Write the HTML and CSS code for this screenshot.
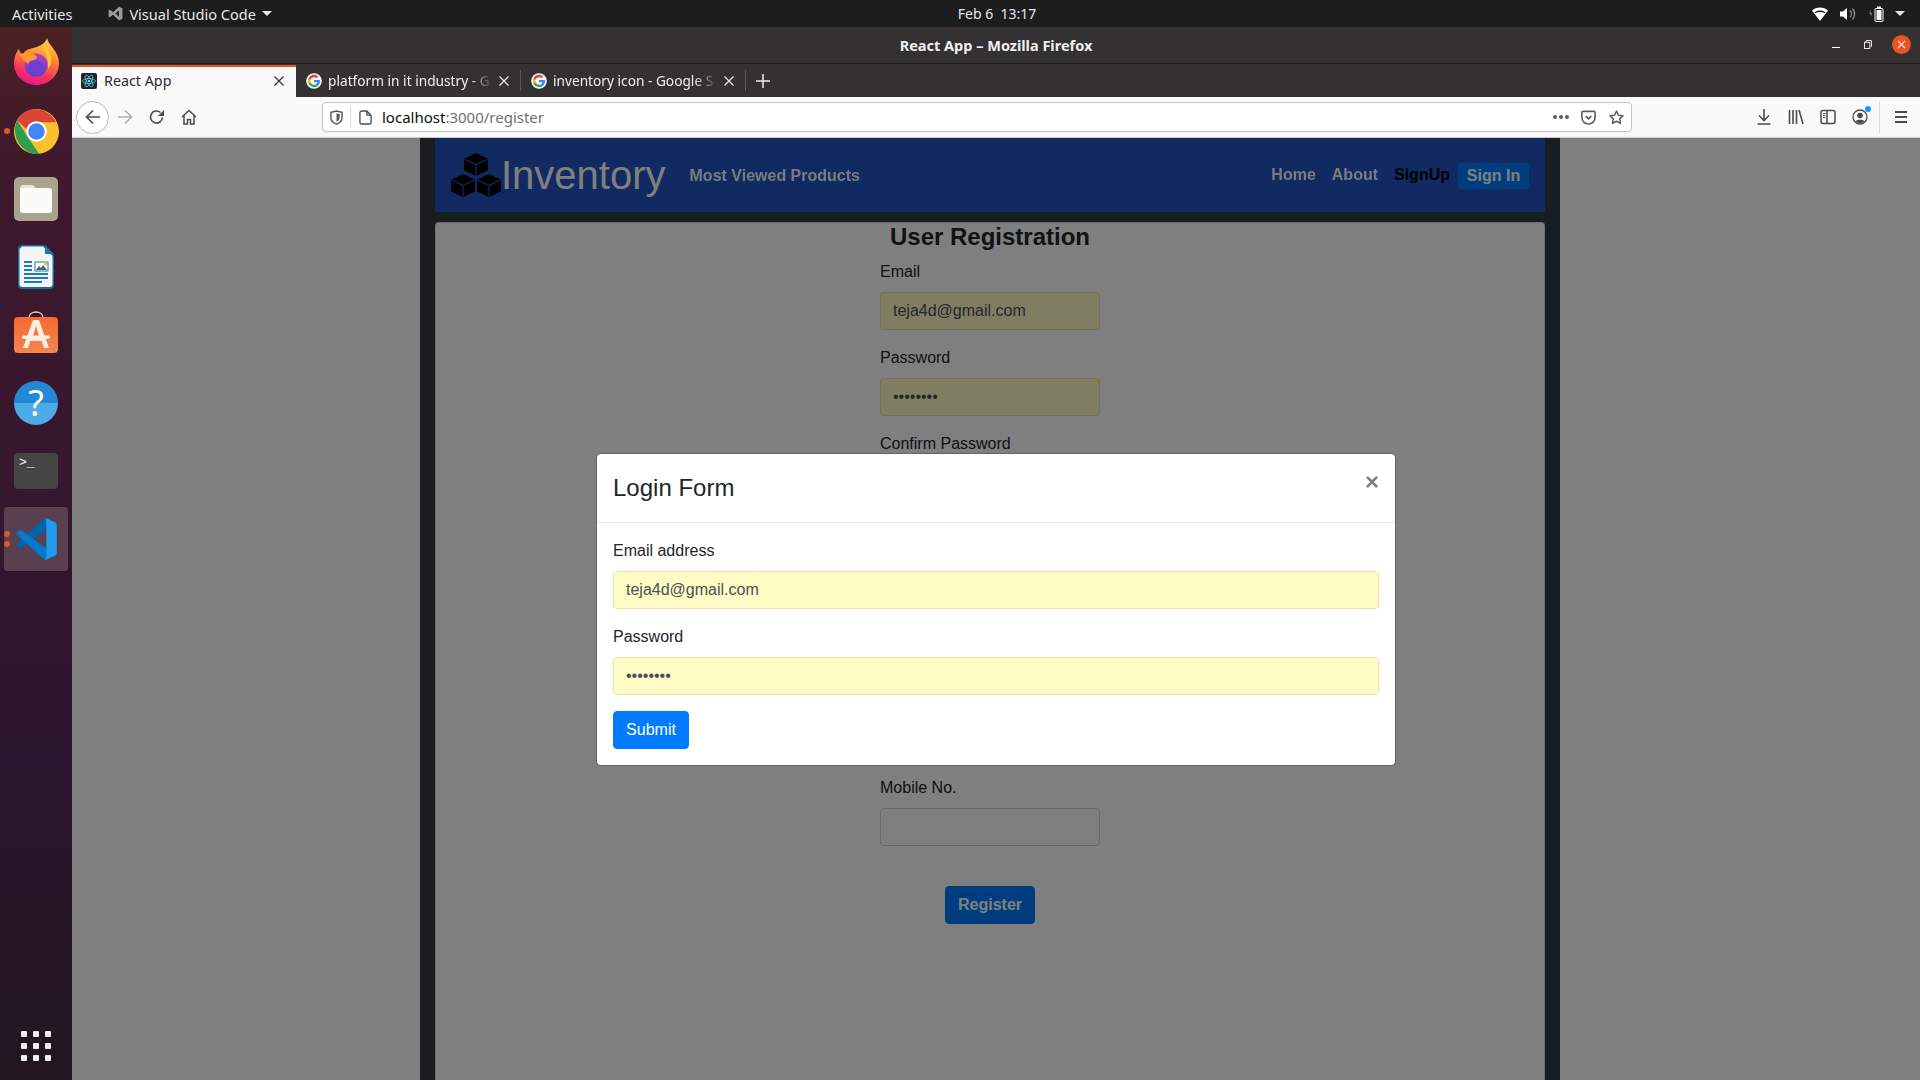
FILE: index.html
```html
<!DOCTYPE html>
<html lang="en">
<head>
<meta charset="utf-8">
<title>React App</title>
<link rel="stylesheet" href="styles.css">
</head>
<body>
<svg class="defs" width="0" height="0">
  <defs>
    <symbol id="g" viewBox="0 0 48 48">
      <circle cx="24" cy="24" r="23.500" fill="#fff"/>
      <path fill="#4285f4" d="M42 24.500c0-1.300-.1-2.500-.3-3.700H24v7h10c-.4 2.300-1.700 4.200-3.700 5.500v4.600h6C39.900 34.700 42 30.100 42 24.500z"/>
      <path fill="#34a853" d="M24 42.500c5 0 9.200-1.700 12.300-4.500l-6-4.600c-1.700 1.100-3.800 1.800-6.300 1.800-4.800 0-8.900-3.200-10.300-7.600H7.500v4.800C10.500 38.400 16.800 42.500 24 42.500z"/>
      <path fill="#fbbc05" d="M13.700 27.600c-.8-2.300-.8-4.900 0-7.200v-4.800H7.500c-2.500 5-2.500 11.800 0 16.800l6.200-4.800z"/>
      <path fill="#ea4335" d="M24 12.800c2.700 0 5.100.9 7 2.800l5.300-5.300C33.100 7.300 28.900 5.500 24 5.500c-7.200 0-13.500 4.100-16.500 10.100l6.200 4.800c1.400-4.400 5.500-7.600 10.300-7.600z"/>
    </symbol>
    <symbol id="cube" viewBox="0 0 24 23">
      <path fill="#000" d="M12 0l12 5.800v11.400L12 23 0 17.200V5.800z"/>
      <path fill="none" stroke="#2254c4" stroke-width="1.200" d="M0.500 6L12 11.500 23.500 6M12 11.500V23"/>
    </symbol>
  </defs>
</svg>

<header class="topbar">
  <div class="top-left">
    <span class="activities">Activities</span>
    <span class="app-menu">
      <svg class="vs-mono" viewBox="0 0 24 24"><path fill="#9a9a9a" d="M17.500 1L23 3.700v16.600L17.500 23 8 14l-5 4-2-1.300V7.300L3 6l5 4zM17.500 7L12 12l5.500 5z"/></svg>
      Visual Studio Code
      <i class="caret"></i>
    </span>
  </div>
  <div class="clock">Feb 6&nbsp;&nbsp;13:17</div>
  <div class="tray">
    <svg class="t-wifi" viewBox="0 0 16 14"><path fill="#fff" d="M0 3.500C4-.5 12-.5 16 3.500L8 14z"/><path fill="#1d1d1d" d="M2.500 5.200c3-2.200 8-2.200 11 0l-.7 1C10 4.500 6 4.500 3.200 6.200z"/></svg>
    <svg class="t-vol" viewBox="0 0 16 14"><path fill="#fff" d="M0 4.500h3L7 1v12L3 9.500H0z"/><path fill="none" stroke="#9a9a9a" stroke-width="1.200" d="M10 3.500c1.800 2 1.800 5 0 7M12.500 1.500c2.800 3 2.800 8 0 11"/></svg>
    <svg class="t-bat" viewBox="0 0 16 16"><path fill="#777" d="M1 8l2-4v3h1.500l-2 4V8z"/><rect x="7" y="2.500" width="8" height="13" rx="1" fill="none" stroke="#fff"/><rect x="9" y="0.500" width="4" height="2" fill="#fff"/><rect x="8.500" y="4" width="5" height="10" fill="#fff"/></svg>
    <i class="caret"></i>
  </div>
</header>

<div class="desktop">
  <nav class="dock">
    <div class="dock-item dock-ff">
      <svg class="ic-ff" viewBox="0 0 45 47">
        <defs>
          <linearGradient id="ffa" x1="0.700" y1="0" x2="0.400" y2="1"><stop offset="0" stop-color="#ffd83f"/><stop offset=".4" stop-color="#ff8a30"/><stop offset=".75" stop-color="#f8345a"/><stop offset="1" stop-color="#e8158a"/></linearGradient>
          <linearGradient id="ffb" x1="0.500" y1="0" x2="0.500" y2="1"><stop offset="0" stop-color="#b93fc0"/><stop offset="1" stop-color="#5a3fd6"/></linearGradient>
        </defs>
        <path fill="url(#ffa)" d="M33 0c1 7 12 13 12 25 0 12.500-10 22-22.500 22S0 37.500 0 25c0-6 2.500-11.500 5-14 .5 3 2 4.500 4 5 3-6 10-5 16-8 4-2 7-4 8-8z"/>
        <circle cx="22" cy="27" r="11.500" fill="url(#ffb)"/>
        <circle cx="22" cy="30" r="7.500" fill="#6b3fd0"/>
        <path fill="#ff9a2e" d="M6 17c4-3 10-3 15 0 3 2 2 4-1 5-3 0-5 1-6 4-3-3-6-5-8-9z"/>
        <path fill="#ffc83a" d="M28 6c6 4 10 10 9 19-1 3-2 5-3 6 1-9-2-17-6-25z"/>
      </svg>
    </div>
    <div class="dock-item">
      <i class="run-dot"></i>
      <svg class="ic-chrome" viewBox="0 0 48 48">
        <circle cx="24" cy="24" r="24" fill="#fbc02d"/>
        <path fill="#2e9e4f" d="M3.200 12L16 32 27 48C12 50-5 32 3.200 12z"/>
        <path fill="#db4437" d="M3.200 12C12-4 36-4 44.800 14H24c-6 0-9 3-10 8z"/>
        <circle cx="24" cy="24" r="11" fill="#fff"/>
        <circle cx="24" cy="24" r="8.800" fill="#4285f4"/>
      </svg>
    </div>
    <div class="dock-item">
      <svg class="ic-files" viewBox="0 0 44 44">
        <rect width="44" height="44" rx="5" fill="#a8a28f"/>
        <path fill="#e6e3d9" d="M6 11a3 3 0 0 1 3-3h10l4 4H6z"/>
        <rect x="6" y="11" width="32" height="25" rx="2.500" fill="#fbfbf8"/>
      </svg>
    </div>
    <div class="dock-item">
      <svg class="ic-writer" viewBox="0 0 36 44">
        <path fill="#0f6f9f" d="M4 0h22l10 10v30a4 4 0 0 1-4 4H4a4 4 0 0 1-4-4V4a4 4 0 0 1 4-4z"/>
        <path fill="#f5f5f5" d="M4 1.500h21l9.500 9.500v28a3 3 0 0 1-3 3H4.500a3 3 0 0 1-3-3V4z"/>
        <path fill="#1379b5" d="M27 0l9 9h-9z"/>
        <path fill="#1a7fb8" d="M6 16h8v2H6zM6 20h8v2H6zM6 24h8v2H6zM6 28h24v2H6zM6 32h24v2H6zM6 36h18v2H6z"/>
        <rect x="17" y="17" width="13" height="9" fill="#fff" stroke="#1a7fb8"/>
        <path fill="#50606a" d="M18 25l3-4 2 2 2-3 4 5z"/>
        <rect x="26" y="17.500" width="3" height="3" fill="#f5c242"/>
      </svg>
    </div>
    <div class="dock-item">
      <svg class="ic-store" viewBox="0 0 44 42">
        <defs><linearGradient id="sto" x1="0" y1="0" x2="0" y2="1"><stop offset="0" stop-color="#f26a2e"/><stop offset="1" stop-color="#f58552"/></linearGradient></defs>
        <path fill="none" stroke="#f3d2a8" stroke-width="1.500" d="M15 7c0-8 14-8 14 0"/>
        <rect y="6" width="44" height="36" rx="4" fill="url(#sto)"/>
        <path fill="#fdeee2" d="M19 9h6l10 28h-5l-2.300-7h-11.400L14 37H9z"/>
        <path fill="#f47a42" d="M22 15l-3 10h6z"/>
        <rect x="8" y="24.500" width="28" height="3.500" rx="1.700" fill="#fdeee2"/>
      </svg>
    </div>
    <div class="dock-item">
      <div class="ic-help">?</div>
    </div>
    <div class="dock-item">
      <div class="ic-term">&gt;_</div>
    </div>
    <div class="dock-item dock-active">
      <i class="run-dot run-a"></i>
      <i class="run-dot run-b"></i>
      <svg class="ic-vs" viewBox="0 0 100 100">
        <path fill="#0065a9" d="M96 10.800L75.400.9a6.200 6.200 0 0 0-7.100 1.200L4.900 60c-1.700 1.600-1.700 4.200 0 5.800l5.500 5c1.300 1.200 3.300 1.300 4.700.200L96 12z"/>
        <path fill="#007acc" d="M96 89.200L75.400 99.100a6.200 6.200 0 0 1-7.100-1.200L4.900 40c-1.700-1.600-1.700-4.200 0-5.800l5.500-5c1.300-1.200 3.300-1.300 4.700-.200L96 88z"/>
        <path fill="#1f9cf0" d="M75.400 99.100a6.200 6.200 0 0 1-7.100-1.200c2.300 2.300 6.200.7 6.200-2.600V4.700c0-3.300-3.900-4.900-6.200-2.600a6.200 6.200 0 0 1 7.100-1.200l20.600 9.900c2.200 1 3.500 3.200 3.500 5.600v67.200c0 2.400-1.400 4.600-3.500 5.600z"/>
      </svg>
    </div>
    <div class="dock-spacer"></div>
    <div class="apps-grid"><i></i><i></i><i></i><i></i><i></i><i></i><i></i><i></i><i></i></div>
  </nav>

  <div class="browser">
    <div class="titlebar">
      <span class="win-title">React App – Mozilla Firefox</span>
      <div class="win-ctrls">
        <i class="w-min"></i>
        <svg class="w-max" viewBox="0 0 9 10"><path fill="none" stroke="#fff" d="M2.500 2.500V.5h6v6.500H7"/><rect x="0.500" y="2.500" width="6" height="7" fill="none" stroke="#fff"/></svg>
        <span class="w-close"><svg viewBox="0 0 10 10"><path stroke="#fff" stroke-width="1.200" d="M1 1l8 8M9 1l-8 8"/></svg></span>
      </div>
    </div>

    <div class="tabbar">
      <div class="tab tab-active">
        <svg class="fav" viewBox="0 0 16 16"><rect width="16" height="16" rx="2" fill="#20232a"/><g fill="none" stroke="#61dafb" stroke-width=".7"><ellipse cx="8" cy="8" rx="6.500" ry="2.500"/><ellipse cx="8" cy="8" rx="6.500" ry="2.500" transform="rotate(60 8 8)"/><ellipse cx="8" cy="8" rx="6.500" ry="2.500" transform="rotate(120 8 8)"/></g><circle cx="8" cy="8" r="1.300" fill="#61dafb"/></svg>
        <span class="tab-label">React App</span>
        <svg class="tab-x" viewBox="0 0 10 10"><path stroke="currentColor" stroke-width="1.300" d="M.5.5l9 9M9.500.5l-9 9"/></svg>
      </div>
      <div class="tab tab-dark tab-sep">
        <svg class="fav"><use href="#g"/></svg>
        <span class="tab-label tab-fade">platform in it industry - G</span>
        <svg class="tab-x" viewBox="0 0 10 10"><path stroke="currentColor" stroke-width="1.300" d="M.5.5l9 9M9.500.5l-9 9"/></svg>
      </div>
      <div class="tab tab-dark tab-sep">
        <svg class="fav"><use href="#g"/></svg>
        <span class="tab-label tab-fade">inventory icon - Google S</span>
        <svg class="tab-x" viewBox="0 0 10 10"><path stroke="currentColor" stroke-width="1.300" d="M.5.5l9 9M9.500.5l-9 9"/></svg>
      </div>
      <svg class="new-tab" viewBox="0 0 14 14"><path stroke="#f0f0f0" stroke-width="1.500" d="M7 0v14M0 7h14"/></svg>
    </div>

    <div class="toolbar">
      <span class="back"><svg viewBox="0 0 16 16"><path fill="none" stroke="#4a4a4f" stroke-width="1.600" d="M15 8H1.500M8 1.500L1.500 8 8 14.500"/></svg></span>
      <span class="tb-btn"><svg viewBox="0 0 16 16"><path fill="none" stroke="#b1b1b3" stroke-width="1.600" d="M1 8h13.500M8 1.500L14.500 8 8 14.500"/></svg></span>
      <span class="tb-btn"><svg viewBox="0 0 16 16"><path fill="none" stroke="#4a4a4f" stroke-width="1.600" d="M13.500 8.500a6 6 0 1 1-2-5"/><path fill="#4a4a4f" d="M15 1v6H9z"/></svg></span>
      <span class="tb-btn"><svg viewBox="0 0 16 16"><path fill="none" stroke="#4a4a4f" stroke-width="1.500" d="M1 8l7-6.500L15 8M3 6.500V15h3.500v-4.500h3V15H13V6.500"/></svg></span>
      <div class="urlbar">
        <svg class="u-shield" viewBox="0 0 14 16"><path fill="none" stroke="#5b5b5f" stroke-width="1.600" d="M7 1l6 1.500V8c0 3-2.500 6-6 7-3.500-1-6-4-6-7V2.500z"/><path fill="#5b5b5f" d="M7 3.500l3.500 1V8c0 2-1.500 3.500-3.500 4.500z"/></svg>
        <i class="u-sep"></i>
        <svg class="u-page" viewBox="0 0 14 16"><path fill="none" stroke="#4a4a4f" stroke-width="1.400" d="M3 1h5.500L13 5.500V13a2 2 0 0 1-2 2H3a2 2 0 0 1-2-2V3a2 2 0 0 1 2-2zM8.500 1v4.500H13"/></svg>
        <span class="u-text"><b>localhost</b>:3000/register</span>
        <span class="u-dots"><i></i><i></i><i></i></span>
        <svg class="u-pocket" viewBox="0 0 16 16"><path fill="none" stroke="#5b5b5f" stroke-width="1.700" d="M2 1.500h12a1 1 0 0 1 1 1V8a7 7 0 0 1-14 0V2.500a1 1 0 0 1 1-1zM5 6.500l3 3 3-3"/></svg>
        <svg class="u-star" viewBox="0 0 16 16"><path fill="none" stroke="#5b5b5f" stroke-width="1.600" stroke-linejoin="round" d="M8 1.200l2.100 4.400 4.800.6-3.500 3.300.9 4.800L8 12l-4.300 2.300.9-4.800L1.100 6.200l4.800-.6z"/></svg>
      </div>
      <div class="tools">
        <svg class="tool" viewBox="0 0 16 16"><path fill="none" stroke="#4a4a4f" stroke-width="1.600" d="M8 0v11M3 6.500l5 5 5-5M1.500 15h13"/></svg>
        <svg class="tool" viewBox="0 0 16 16"><path fill="none" stroke="#4a4a4f" stroke-width="1.600" d="M1.500 1v14M5 1v14M8.500 1v14M11 1l4 14"/></svg>
        <svg class="tool" viewBox="0 0 16 16"><rect x="1" y="1.500" width="14" height="13" rx="2" fill="none" stroke="#4a4a4f" stroke-width="1.500"/><path stroke="#4a4a4f" stroke-width="1.500" d="M7 1.500v13"/><path stroke="#4a4a4f" d="M3 4.500h2.500M3 6.500h2.500M3 8.500h2.500"/></svg>
        <span class="tool-prof">
          <svg class="tool" viewBox="0 0 16 16"><circle cx="8" cy="8" r="7" fill="none" stroke="#4a4a4f" stroke-width="1.300"/><circle cx="8" cy="6.500" r="2.800" fill="#4a4a4f"/><path fill="#4a4a4f" d="M3.500 12.500c1-2.500 8-2.500 9 0-2 2-7 2-9 0z"/></svg>
          <i class="prof-dot"></i>
        </span>
        <i class="tool-sep"></i>
        <svg class="tool" viewBox="0 0 16 16"><path stroke="#4a4a4f" stroke-width="2" d="M2 3h12M2 8h12M2 13h12"/></svg>
      </div>
    </div>

    <main class="page">
      <div class="container">
        <div class="navbar">
          <a class="brand">
            <span class="logo">
              <svg class="cube cube-top"><use href="#cube"/></svg>
              <svg class="cube cube-left"><use href="#cube"/></svg>
              <svg class="cube cube-right"><use href="#cube"/></svg>
            </span>
            <span class="brand-name">Inventory</span>
          </a>
          <a class="nav-link mvp">Most Viewed Products</a>
          <div class="nav-right">
            <a class="nav-link">Home</a>
            <a class="nav-link">About</a>
            <a class="nav-link nav-black">SignUp</a>
            <a class="sign-in">Sign In</a>
          </div>
        </div>
        <div class="card">
          <h3 class="card-title">User Registration</h3>
          <form class="reg-form">
            <div class="field"><label class="lbl">Email</label><input class="inp inp-auto" value="teja4d@gmail.com"></div>
            <div class="field"><label class="lbl">Password</label><input class="inp inp-auto" type="password" value="12345678"></div>
            <div class="field"><label class="lbl">Confirm Password</label><input class="inp"></div>
            <div class="field"><label class="lbl">&nbsp;</label><input class="inp"></div>
            <div class="field"><label class="lbl">&nbsp;</label><input class="inp"></div>
            <div class="field"><label class="lbl">&nbsp;</label><input class="inp"></div>
            <div class="field"><label class="lbl">Mobile No.</label><input class="inp"></div>
            <button type="button" class="btn-register">Register</button>
          </form>
        </div>
      </div>

      <div class="backdrop"></div>
      <div class="modal-wrap">
        <div class="modal">
          <div class="modal-head">
            <h5 class="modal-title">Login Form</h5>
            <span class="close">×</span>
          </div>
          <form class="modal-body">
            <div class="field"><label class="lbl">Email address</label><input class="inp inp-auto inp-wide" value="teja4d@gmail.com"></div>
            <div class="field"><label class="lbl">Password</label><input class="inp inp-auto inp-wide" type="password" value="12345678"></div>
            <button type="button" class="btn-submit">Submit</button>
          </form>
        </div>
      </div>
    </main>
  </div>
</div>
</body>
</html>
```

FILE: styles.css
```css
* { box-sizing: border-box; }
html, body { margin: 0; height: 100%; }
body {
  width: 1920px;
  height: 1080px;
  overflow: hidden;
  display: flex;
  flex-direction: column;
  font-family: "Liberation Sans", Arial, sans-serif;
  font-size: 16px;
  color: #212529;
}
.defs { position: absolute; }

/* GNOME top bar */
.topbar {
  height: 27px;
  flex: none;
  background: #1d1d1d;
  color: #e8e8e8;
  font-family: "Noto Sans", sans-serif;
  font-size: 14.5px;
  display: grid;
  grid-template-columns: 1fr auto 1fr;
  align-items: center;
  padding-left: 12px;
}
.top-left { display: flex; align-items: center; gap: 36px; }
.app-menu { display: flex; align-items: center; gap: 6px; }
.vs-mono { width: 15px; height: 15px; }
.caret {
  display: inline-block;
  width: 0; height: 0;
  border-left: 5px solid transparent;
  border-right: 5px solid transparent;
  border-top: 5px solid #e8e8e8;
}
.clock { padding-left: 62px; font-size: 14px; }
.tray { display: flex; align-items: center; justify-content: flex-end; padding-right: 15px; gap: 12px; }
.t-wifi { width: 16px; height: 14px; }
.t-vol { width: 16px; height: 14px; }
.t-bat { width: 16px; height: 16px; margin-right: -1px; }

/* Desktop */
.desktop { flex: 1; display: flex; min-height: 0; }
.dock {
  width: 72px;
  flex: none;
  padding-top: 2px;
  display: flex;
  flex-direction: column;
  align-items: center;
  background: linear-gradient(#4b2122 0, #40192c 12%, #35172f 45%, #2c1530 70%, #231620 100%);
}
.dock-item {
  position: relative;
  height: 68px;
  width: 64px;
  display: flex;
  align-items: center;
  justify-content: center;
  flex: none;
}
.dock-ff svg { margin-bottom: 4px; }
.run-dot {
  position: absolute;
  left: 0;
  top: 31px;
  width: 6px; height: 6px;
  border-radius: 50%;
  background: #e95420;
}
.run-a { left: 0; top: 24px; }
.run-b { left: 0; top: 34px; }
.ic-ff { width: 45px; height: 47px; }
.ic-chrome { width: 45px; height: 45px; }
.ic-files { width: 44px; height: 44px; }
.ic-writer { width: 36px; height: 44px; }
.ic-store { width: 44px; height: 42px; margin-bottom: 6px; }
.ic-help {
  width: 44px; height: 44px;
  border-radius: 50%;
  background: linear-gradient(#2488d8 50%, #4dabe8 50%);
  color: #fff;
  font-family: "Noto Sans", sans-serif;
  font-size: 36px;
  line-height: 44px;
  text-align: center;
}
.ic-term {
  width: 44px; height: 36px;
  border-radius: 4px;
  background: #454545;
  color: #fff;
  font-family: "Liberation Mono", monospace;
  font-size: 13px;
  line-height: 14px;
  padding: 3px 0 0 5px;
}
.dock-active { background: #584050; border-radius: 4px; height: 64px; margin-top: 2px; }
.ic-vs { width: 42px; height: 42px; }
.dock-spacer { flex: 1; }
.apps-grid {
  display: grid;
  grid-template-columns: repeat(3, 6px);
  gap: 6px;
  margin-bottom: 19px;
}
.apps-grid i { width: 6px; height: 6px; background: #eeeeee; border-radius: 1px; }

/* Browser */
.browser { flex: 1; display: flex; flex-direction: column; min-width: 0; }
.titlebar {
  height: 37px;
  flex: none;
  position: relative;
  background: #333132;
  border-bottom: 1px solid #1e1e1e;
  display: flex;
  align-items: center;
  justify-content: center;
  color: #f0f0f0;
  font-family: "Noto Sans", sans-serif;
  font-weight: 700;
  font-size: 14.5px;
}
.win-ctrls {
  position: absolute;
  right: 9px;
  top: 8px;
  display: flex;
  align-items: center;
  gap: 24px;
}
.w-min { width: 8px; height: 1px; background: #fff; margin-top: 6px; }
.w-max { width: 8px; height: 9px; }
.w-close {
  width: 19px; height: 19px;
  margin-left: -4px;
  border-radius: 50%;
  background: #e95420;
  display: flex;
  align-items: center;
  justify-content: center;
}
.w-close svg { width: 9px; height: 9px; }

.tabbar {
  height: 33px;
  flex: none;
  background: #333132;
  display: flex;
  align-items: stretch;
  color: #f0f0f0;
  font-family: "Noto Sans", sans-serif;
  font-size: 14.3px;
}
.tab {
  width: 225px;
  display: flex;
  align-items: center;
  padding: 0 9px;
  flex: none;
  position: relative;
}
.tab-active {
  width: 224px;
  background: #f9f9fa;
  color: #2b2b2e;
  border-top: 2px solid #e95420;
  margin-top: 1px;
  padding-bottom: 3px;
}
.tab-dark { font-size: 13.7px; }
.tab-sep::after {
  content: "";
  position: absolute;
  right: 0; top: 6px; bottom: 6px;
  width: 1px;
  background: #5a585a;
}
.fav { width: 16px; height: 16px; flex: none; margin-right: 7px; }
.tab-dark .fav { margin-left: 1px; margin-right: 6px; }
.tab-label { flex: 1; white-space: nowrap; overflow: hidden; }
.tab-fade {
  -webkit-mask-image: linear-gradient(to right, #000 85%, transparent 100%);
  mask-image: linear-gradient(to right, #000 85%, transparent 100%);
}
.tab-x { width: 10px; height: 10px; flex: none; margin-left: 6px; margin-right: 3px; color: #e8e8e8; }
.tab-active .tab-x { color: #3a3a3e; }
.new-tab { width: 14px; height: 14px; align-self: center; margin-left: 10px; }

.toolbar {
  height: 41px;
  flex: none;
  background: #f9f9fa;
  border-bottom: 1px solid #ccc;
  display: flex;
  align-items: center;
  padding-left: 4px;
}
.back {
  width: 33px; height: 33px;
  border-radius: 50%;
  border: 1px solid #b8b8ba;
  background: #fff;
  display: flex;
  align-items: center;
  justify-content: center;
}
.back svg, .tb-btn svg { width: 16px; height: 16px; }
.tb-btn { width: 32px; display: flex; justify-content: center; }
.urlbar {
  width: 1310px;
  height: 30px;
  margin-left: 117px;
  background: #fff;
  border: 1px solid #c4c4c6;
  border-radius: 4px;
  display: flex;
  align-items: center;
  padding: 0 7px 0 7px;
  box-shadow: 0 1px 2px rgba(0,0,0,.04);
}
.u-shield { width: 13px; height: 15px; flex: none; }
.u-sep { width: 1px; height: 22px; background: #d7d7db; margin: 0 8px 0 7px; flex: none; }
.u-page { width: 13px; height: 15px; flex: none; }
.u-text {
  flex: 1;
  margin-left: 10px;
  font-family: "Noto Sans", sans-serif;
  font-size: 15px;
  color: #6f6f73;
  white-space: nowrap;
}
.u-text b { font-weight: 400; color: #0c0c0d; }
.u-dots { display: flex; gap: 2px; margin-right: 12px; }
.u-dots i { width: 4px; height: 4px; border-radius: 50%; background: #5b5b5f; }
.u-pocket { width: 15px; height: 15px; flex: none; margin-right: 13px; }
.u-star { width: 15px; height: 15px; flex: none; }
.tools { flex: 1; display: flex; align-items: center; padding-left: 124px; gap: 16px; }
.tool { width: 16px; height: 16px; display: block; flex: none; }
.tool-prof { position: relative; }
.prof-dot {
  position: absolute;
  right: -3px; top: -3px;
  width: 6px; height: 6px;
  border-radius: 50%;
  background: #0a9dff;
}
.tool-sep { width: 1px; height: 33px; background: #dcdcde; margin-left: -5px; margin-right: -3px; }

/* Page */
.page {
  flex: 1;
  position: relative;
  background: #fff;
  display: flex;
  justify-content: center;
  padding-right: 12px;
  min-height: 0;
  overflow: hidden;
}
.container {
  width: 1140px;
  background: #343a40;
  padding: 0 15px;
  display: flex;
  flex-direction: column;
  gap: 10px;
}
.navbar {
  height: 74px;
  flex: none;
  background: #2254c4;
  display: flex;
  align-items: center;
  padding: 0 16px;
}
.brand { display: flex; align-items: center; color: #fff; }
.logo { position: relative; width: 50px; height: 44px; display: block; }
.cube { position: absolute; width: 24px; height: 23px; }
.cube-top { left: 13px; top: 0; }
.cube-left { left: 0; top: 21px; }
.cube-right { left: 26px; top: 21px; }
.brand-name { font-size: 40px; line-height: 48px; }
.nav-link { font-weight: 700; color: #fff; opacity: .95; padding: 0 8px; }
.mvp { margin-left: 16px; padding-top: 1px; }
.nav-right { margin-left: auto; display: flex; align-items: center; }
.nav-black { color: #000; opacity: 1; }
.sign-in {
  width: 71px;
  height: 26px;
  background: #007bff;
  border-radius: 3px;
  color: #fff;
  font-weight: 700;
  line-height: 26px;
  text-align: center;
  margin-top: 1px;
}
.card {
  flex: 1;
  background: #fff;
  border: 1px solid rgba(0,0,0,.125);
  border-bottom: 0;
  border-radius: 4px 4px 0 0;
  display: flex;
  flex-direction: column;
  align-items: center;
}
.card-title {
  margin: 0 0 9px;
  font-size: 24px;
  line-height: 28px;
  font-weight: 700;
}
.reg-form { width: 220px; display: flex; flex-direction: column; }
.field { margin-bottom: 16px; display: flex; flex-direction: column; }
.lbl { line-height: 24px; margin-bottom: 8px; }
.inp {
  width: 100%;
  height: 38px;
  padding: 6px 12px;
  font: 16px/24px "Liberation Sans", Arial, sans-serif;
  color: #495057;
  background: #fff;
  border: 1px solid #ced4da;
  border-radius: 4px;
  outline: none;
}
.inp-auto { background: #fffbc4; border-color: #f0e0a8; }
.btn-register {
  align-self: center;
  margin-top: 24px;
  width: 90px;
  height: 38px;
  background: #007bff;
  border: 1px solid #007bff;
  border-radius: 4px;
  color: #fff;
  font: 700 16px/24px "Liberation Sans", Arial, sans-serif;
  padding: 0;
}

/* Modal */
.backdrop { position: absolute; inset: 0; background: rgba(0,0,0,.5); }
.modal-wrap {
  position: absolute;
  inset: 0;
  display: flex;
  justify-content: center;
  padding-top: 315px;
  pointer-events: none;
}
.modal {
  width: 800px;
  height: 313px;
  background: #fff;
  border: 1px solid rgba(0,0,0,.2);
  background-clip: padding-box;
  border-radius: 5px;
}
.modal-head {
  height: 69px;
  padding: 16px;
  border-bottom: 1px solid #dee2e6;
  display: flex;
  justify-content: space-between;
  align-items: flex-start;
}
.modal-title { margin: 0; font-size: 24px; line-height: 36px; font-weight: 400; }
.close { font-size: 24px; font-weight: 700; color: #000; opacity: .5; line-height: 24px; }
.modal-body { padding: 16px; display: flex; flex-direction: column; }
.btn-submit {
  align-self: flex-start;
  width: 76px;
  height: 38px;
  background: #007bff;
  border: 1px solid #007bff;
  border-radius: 4px;
  color: #fff;
  font: 16px/24px "Liberation Sans", Arial, sans-serif;
  padding: 0;
}
```
